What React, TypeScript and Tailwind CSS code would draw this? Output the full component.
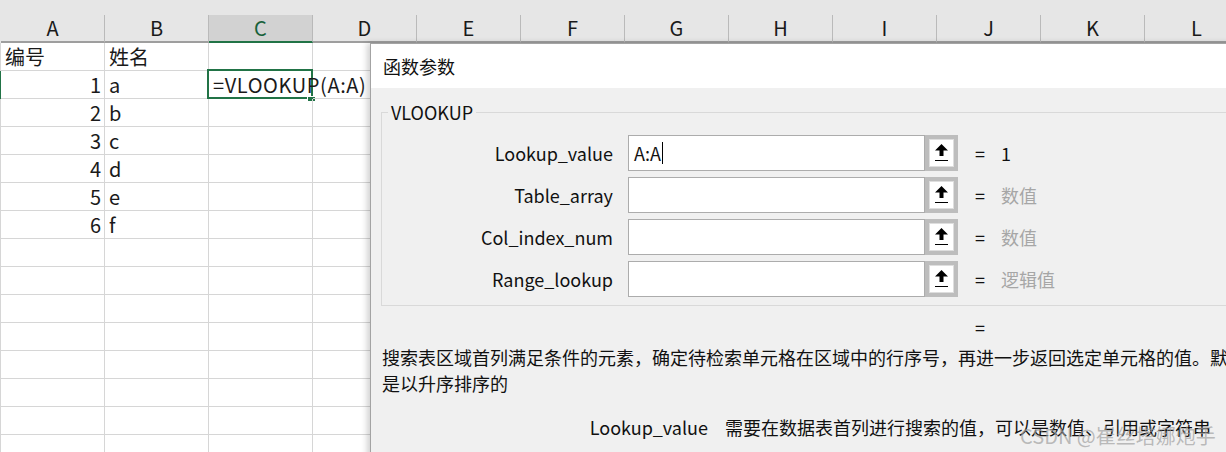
import React from 'react';

const COLS = ['A', 'B', 'C', 'D', 'E', 'F', 'G', 'H', 'I', 'J', 'K', 'L'];

const ROWS: [string, string][] = [
  ['编号', '姓名'],
  ['1', 'a'],
  ['2', 'b'],
  ['3', 'c'],
  ['4', 'd'],
  ['5', 'e'],
  ['6', 'f'],
  ['', ''],
  ['', ''],
  ['', ''],
  ['', ''],
  ['', ''],
  ['', ''],
  ['', ''],
  ['', ''],
];

const ARGS = [
  { name: 'Lookup_value', input: 'A:A', value: '1', muted: false },
  { name: 'Table_array', input: '', value: '数值', muted: true },
  { name: 'Col_index_num', input: '', value: '数值', muted: true },
  { name: 'Range_lookup', input: '', value: '逻辑值', muted: true },
];

function CollapseButton() {
  return (
    <div className="w-[33px] h-[36px] border-[4px] border-[#bdbdbd] bg-white shadow-[inset_0_0_0_1px_#dedede] flex items-center justify-center">
      <svg width="13" height="18" viewBox="0 0 13 18">
        <polygon points="6.5,0 13,6.5 8.5,6.5 8.5,12 4.5,12 4.5,6.5 0,6.5" fill="#000" />
        <rect x="0" y="16" width="13" height="1" fill="#000" />
      </svg>
    </div>
  );
}

function Sheet() {
  return (
    <div className="font-['Noto_Sans_CJK_SC',sans-serif] text-[#1a1a1a]">
      {/* top strip */}
      <div className="h-[15px] bg-[#e6e6e6]" />

      {/* column headers */}
      <div className="flex h-[28px] pl-[1px] bg-[#e6e6e6]">
        {COLS.map((c) => {
          const active = c === 'C';
          return (
            <div
              key={c}
              className={`w-[104px] shrink-0 flex items-center justify-center text-[20px] border-r border-b-2 ${
                active
                  ? 'bg-[#d2d2d2] border-b-[#217346] border-r-[#b9b9b9] text-[#17613a]'
                  : 'border-b-[#9e9e9e] border-r-[#bababa]'
              }`}
            >
              {c}
            </div>
          );
        })}
      </div>

      {/* cells */}
      {ROWS.map(([a, b], i) => (
        <div
          key={i}
          className={`flex h-[28px] border-l ${i === 1 ? 'border-l-[#217346]' : 'border-l-[#d6d6d6]'}`}
        >
          {COLS.map((c) => {
            const numeric = c === 'A' && i > 0;
            return (
              <div
                key={c}
                className={`relative w-[104px] shrink-0 border-r border-b border-[#d6d6d6] flex items-center whitespace-nowrap text-[20px] leading-none ${
                  numeric ? 'justify-end pr-[3px]' : 'pl-[4px]'
                }`}
              >
                {c === 'A' && a}
                {c === 'B' && b}
                {c === 'C' && i === 1 && (
                  <>
                    <span className="relative z-10 tracking-[0.6px]">=VLOOKUP(A:A)</span>
                    <div className="absolute -left-[2px] -top-[2px] -right-[1px] -bottom-[1px] border-2 border-[#217346]" />
                    <div className="absolute -right-[3px] -bottom-[3px] w-[8px] h-[5px] bg-[#217346] border-l border-t border-white" />
                  </>
                )}
              </div>
            );
          })}
        </div>
      ))}
    </div>
  );
}

function FunctionDialog() {
  return (
    <div className="absolute left-[370px] top-[43px] w-[900px] h-[430px] bg-[#f0f0f0] border-l border-t border-[#a3a3a3] shadow-[-3px_0_6px_rgba(0,0,0,0.18)] font-['Noto_Sans_CJK_SC',sans-serif] text-[#111] text-[18px]">
      <div className="h-[44px] bg-white flex items-center pl-[12px]">函数参数</div>

      <div className="pl-[10px] pt-[12px]">
        <fieldset className="border border-[#d9d9d9] pt-[11px] pb-[8px]">
          <legend className="ml-[6px] px-[3px] leading-[24px]">VLOOKUP</legend>
          <div className="flex flex-col gap-[6px]">
            {ARGS.map((arg) => (
              <div key={arg.name} className="flex items-center h-[36px]">
                <div className="w-[231px] text-right">{arg.name}</div>
                <div className="ml-[15px] w-[297px] h-[36px] bg-white border border-[#acacac] flex items-center pl-[5px]">
                  {arg.input}
                  {arg.input && <span className="inline-block w-[1px] h-[22px] bg-black ml-[1px]" />}
                </div>
                <CollapseButton />
                <div className="ml-[17px]">=</div>
                <div className={`ml-[16px] ${arg.muted ? 'text-[#a6a6a6]' : ''}`}>{arg.value}</div>
              </div>
            ))}
          </div>
        </fieldset>

        <div className="mt-[8px] leading-[26px] pl-[594px]">=</div>
        <div className="mt-[4px] leading-[26px] pl-[1px] whitespace-nowrap">
          搜索表区域首列满足条件的元素，确定待检索单元格在区域中的行序号，再进一步返回选定单元格的值。默认情况下，表
        </div>
        <div className="leading-[26px] pl-[1px] whitespace-nowrap">是以升序排序的</div>

        <div className="mt-[18px] leading-[26px] flex whitespace-nowrap">
          <div className="w-[327px] text-right">Lookup_value</div>
          <div className="ml-[17px]">需要在数据表首列进行搜索的值，可以是数值、引用或字符串</div>
        </div>
      </div>
    </div>
  );
}

export default function App() {
  return (
    <div className="relative w-[1226px] h-[452px] overflow-hidden bg-white">
      <Sheet />
      <FunctionDialog />
      <div className="absolute left-[1020px] top-[421px] text-[20px] text-[#a0a0a0]/70 font-['Noto_Sans_CJK_SC',sans-serif] whitespace-nowrap">
        CSDN @崔丝塔娜炮手
      </div>
    </div>
  );
}
